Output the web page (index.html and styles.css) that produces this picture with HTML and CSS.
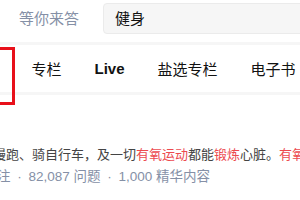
FILE: index.html
```html
<!DOCTYPE html>
<html lang="zh-CN">
<head>
<meta charset="utf-8">
<title>健身 - 搜索</title>
<link rel="stylesheet" href="styles.css">
</head>
<body>
  <header class="header">
    <a class="header-link">等你来答</a>
    <div class="search">健身</div>
  </header>
  <nav class="tabs">
    <ul class="tab-list">
      <li class="tab tab-marked">话题</li>
      <li class="tab">专栏</li>
      <li class="tab tab-latin">Live</li>
      <li class="tab">盐选专栏</li>
      <li class="tab">电子书</li>
    </ul>
  </nav>
  <main class="card">
    <p class="desc">慢跑、骑自行车，及一切<em class="hl">有氧运动</em>都能<em class="hl">锻炼</em>心脏。<em class="hl">有氧</em>运动能提高心肺功能</p>
    <p class="meta">关注<span class="sep">·</span>82,087 问题<span class="sep">·</span>1,000 精华内容</p>
  </main>
</body>
</html>
```

FILE: styles.css
```css
html, body {
  margin: 0;
  padding: 0;
}

body {
  width: 300px;
  height: 200px;
  overflow: hidden;
  background: #f6f6f6;
  font-family: "Liberation Sans", "Noto Sans CJK SC", sans-serif;
  color: #121212;
}

.header {
  display: flex;
  align-items: flex-start;
  gap: 24px;
  height: 39px;
  padding: 3px 0 0 19px;
  background: #fff;
  margin-bottom: 3px;
  white-space: nowrap;
}

.header-link {
  font-size: 15px;
  line-height: 31px;
  color: #8590a6;
}

.search {
  flex: 0 0 auto;
  width: 400px;
  height: 29px;
  line-height: 29px;
  padding-left: 11px;
  border: 1px solid #ebebeb;
  border-radius: 4px;
  background: #f6f6f6;
  font-size: 15px;
  color: #121212;
}

.tabs {
  height: 47px;
  background: #fff;
  margin-bottom: 3px;
}

.tab-list {
  display: flex;
  height: 100%;
  margin: 0 0 0 -48px;
  padding: 0;
  list-style: none;
  white-space: nowrap;
}

.tab {
  position: relative;
  display: flex;
  align-items: center;
  padding: 0 16.5px;
  font-size: 15px;
  color: #121212;
}

.tab-latin {
  font-weight: 700;
}

.tab-marked::after {
  content: "";
  position: absolute;
  top: 2px;
  bottom: -13px;
  left: 0;
  right: 0;
  border: 3px solid #e8101a;
}

.card {
  display: block;
  height: 200px;
  padding-top: 49px;
  background: #fff;
  white-space: nowrap;
}

.desc {
  margin: 0 0 0 -7px;
  font-size: 13px;
  line-height: 22px;
  color: #444;
}

.hl {
  font-style: normal;
  color: #ec4a4f;
}

.meta {
  margin: 0 0 0 -16.5px;
  font-size: 13.5px;
  line-height: 22px;
  color: #8590a6;
}

.sep {
  display: inline-block;
  width: 18px;
  text-align: center;
}
```
